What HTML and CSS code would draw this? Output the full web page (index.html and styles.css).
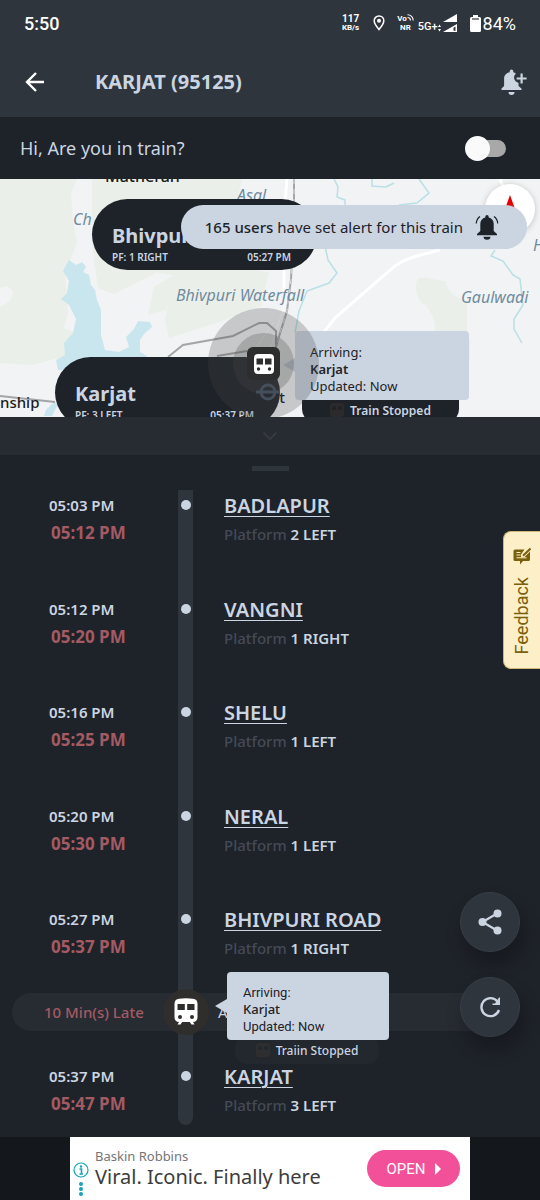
FILE: index.html
```
<!DOCTYPE html>
<html lang="en">
<head>
  <meta charset="UTF-8">
  <meta name="viewport" content="width=device-width, initial-scale=1.0">
  <title>KARJAT (95125)</title>
  <link rel="stylesheet" href="styles.css">
</head>
<body>
  <div class="page">
    <header class="top">
      <div class="status-bar">
        <span class="clock">5:50</span>
        <div class="status-icons">
          <div class="net-speed"><span>117</span><span>KB/s</span></div>
          <svg class="location" width="12" height="16" viewBox="0 0 12 16">
            <path d="M6 1C3.200 1 1.200 3 1.200 5.800 1.200 9 6 14.500 6 14.500S10.800 9 10.800 5.800C10.800 3 8.800 1 6 1z" fill="none" stroke="#fff" stroke-width="1.500"/>
            <circle cx="6" cy="5.800" r="2" fill="#fff"/>
          </svg>
          <div class="volte">
            <span>Vo<svg width="7" height="7" viewBox="0 0 7 7"><path d="M0.500 0.800C3.800 0.800 6.200 3.200 6.200 6.500M0.500 3.500C2.200 3.500 3.500 4.800 3.500 6.500" fill="none" stroke="#fff" stroke-width="1.100"/></svg></span>
            <span>NR</span>
          </div>
          <div class="signal">
            <span>5G+</span>
            <svg width="20" height="20" viewBox="0 0 20 20">
              <path d="M0 14l1.500-2.500L3 14zM0 16l1.500 2.500L3 16z" fill="#fff"/>
              <path d="M5 9L19 1v8z" fill="#fff"/>
              <path d="M5 19L19 11v8z" fill="#fff"/>
              <path d="M15.500 14.800l2-1.200v4.200h-2z" fill="#2f353d"/>
            </svg>
          </div>
          <div class="battery">
            <svg width="11" height="17" viewBox="0 0 11 17">
              <path d="M3 0h5v2h1.500A1.500 1.500 0 0 1 11 3.500v12A1.500 1.500 0 0 1 9.500 17h-8A1.500 1.500 0 0 1 0 15.500v-12A1.500 1.500 0 0 1 1.500 2H3z" fill="#fff"/>
              <path d="M2 4h7" stroke="#2f353d" stroke-width="1.200"/>
            </svg>
            <span>84%</span>
          </div>
        </div>
      </div>
      <div class="title-bar">
        <button class="icon-btn" aria-label="Back">
          <svg width="22" height="22" viewBox="0 0 22 22"><path d="M20 11H3M12 2L3 11l9 9" fill="none" stroke="#fff" stroke-width="2.400"/></svg>
        </button>
        <h1>KARJAT (95125)</h1>
        <button class="icon-btn" aria-label="Set alert">
          <svg width="28" height="28" viewBox="0 0 28 28" fill="#cbd5e1">
            <path d="M11.500 1.500a1.800 1.800 0 0 1 1.800 1.800v.9c1 .3 1.900.8 2.600 1.500-1.700 1.300-2.200 3.400-1.600 5.400.6 2 2.200 3.300 4.200 3.600v3.200l3 2.600v1.600H1.500v-1.600l2.600-2.600v-7.600c0-3 2.200-5.400 5.600-6.100v-.9a1.800 1.800 0 0 1 1.800-1.800z"/>
            <path d="M8.500 24h6a3 3 0 0 1-6 0z"/>
            <path d="M20.500 5.500h2.200v3.900h3.900v2.200h-3.900v3.900h-2.200v-3.900h-3.900V9.400h3.900z"/>
          </svg>
        </button>
      </div>
    </header>

    <label class="in-train">
      <span>Hi, Are you in train?</span>
      <input type="checkbox" class="switch">
    </label>

    <section class="map">
      <svg class="map-tiles" viewBox="0 179 540 238" preserveAspectRatio="xMidYMid slice">
        <rect x="0" y="179" width="540" height="238" fill="#f1f3f4"/>
        <!-- forest -->
        <g fill="#eaf0e9">
          <path d="M0 179h77l-6 14 2 28 4 22-12 30 3 40-4 15 12 5-6 22-38 10-32-2v-56l10-6 3-9-5-6-8 2z"/>
          <path d="M92 179h150l-8 35 4 60-62 6-10 30-18 5 6-28 20-12-18-2-42 21-16-6-6-40z"/>
          <path d="M175 274l50-8 44 6-8 34-42 16-50 16-4-18z"/>
          <path d="M417 280c8-7 18 2 28 1 3 10 8 16 22 20v34h-32c2-16-5-22-9-30-8 0-12-18-9-25zM440 340h30v20h-24z"/>
        </g>
        <!-- lake -->
        <path d="M69 260l7 5 6-3 4 5-3 5 6 3 2 10 4 5 2 10 4 10v25l4 15 14 2 10-5-3-10 8-8 4-8 12 1 2 5-8 7-4 6v12l7 4v14H58l-2-10 9-5-1-12 9-10 3-14-7-14-8-6 6-6 2-12-6-10z" fill="#c9e6ee"/>
        <path d="M46 410l8-8 4 2-6 12h-8z" fill="#c9e6ee"/>
        <!-- streams -->
        <g fill="none" stroke="#b9dfe7" stroke-width="1.500">
          <path d="M334 179l4 8-1 10 8 3v8M372 179v7l14 1 8-4M419 179l10 14-12 10-18 2"/>
          <path d="M325 246l3 14 9 13-8 10-22 8-8 20-4 22M495 250l-4 6 12 5 10 14 7 4 3 26-9 14v10l8 14"/>
        </g>
        <!-- roads -->
        <path d="M440 250c-20 5-34 8-45 16l-28 24-32 28-30 38M500 179l4 10M287 179l-1 12-2 30v70" fill="none" stroke="#fff" stroke-width="3"/>
        <path d="M286 300l-16 50M273 323l-20 30" fill="none" stroke="#fff" stroke-width="1"/>
        <!-- railway -->
        <g fill="none" stroke="#a4a5a7" stroke-width="2">
          <path d="M294 179v40l-3 60-4 32-10 32-4 15"/>
          <path d="M168 357l15-12 50-9 26-13h8l9 8v14M217 356l30-5M0 396l55 6"/>
        </g>
        <path d="M294 179v40l-3 60-4 32-10 32" fill="none" stroke="#d8dadb" stroke-width="1" stroke-dasharray="5 5"/>
        <g class="place">
          <text x="73" y="225">Ch</text>
          <text x="237" y="201">Asal</text>
          <text x="176" y="301">Bhivpuri Waterfall</text>
          <text x="461" y="303">Gaulwadi</text>
          <text x="533" y="251">H</text>
        </g>
        <g class="town">
          <text x="105" y="182" class="town-large">Matheran</text>
          <text x="0" y="408">nship</text>
          <text x="285" y="403" text-anchor="end">Karjat</text>
        </g>
      </svg>

      <button class="compass" aria-label="Reset bearing">
        <svg width="12" height="28" viewBox="0 0 12 28"><path d="M6 0l5 14H1z" fill="#e60000"/><path d="M6 28l5-14H1z" fill="#ccc"/></svg>
      </button>

      <div class="pin pin-bhivpuri">
        <h2>Bhivpuri</h2>
        <p><span>PF: 1 RIGHT</span><span>05:27 PM</span></p>
      </div>
      <div class="pin pin-karjat">
        <h2>Karjat</h2>
        <p><span>PF: 3 LEFT</span><span>05:37 PM</span></p>
      </div>

      <div class="map-chip">
        <svg width="14" height="14" viewBox="0 0 14 14"><rect width="14" height="14" rx="3" fill="#2c2a2a"/><path d="M2 3h4v4H2zM8 3h4v4H8z" fill="#1e2229"/></svg>
        <span>Train Stopped</span>
      </div>
      <div class="callout map-callout">
        <span>Arriving:</span>
        <strong>Karjat</strong>
        <span>Updated: Now</span>
      </div>

      <div class="pulse">
        <div class="pulse-inner">
          <div class="train-pin">
            <svg width="20" height="20" viewBox="0 0 20 20">
              <rect width="20" height="20" rx="4" fill="#fff"/>
              <path d="M2.500 4.500H9v6H2.500zM11 4.500h6.500v6H11z" fill="#2e2d2e"/>
              <circle cx="4.500" cy="15" r="1.700" fill="#2e2d2e"/><circle cx="15.500" cy="15" r="1.700" fill="#2e2d2e"/>
            </svg>
          </div>
        </div>
      </div>
      <svg class="roundel" width="24" height="18" viewBox="0 0 24 18"><circle cx="12" cy="9" r="7" fill="none" stroke="#454e5b" stroke-width="3"/><path d="M0 9h24" stroke="#454e5b" stroke-width="3"/></svg>

      <div class="alert-banner">
        <span><b>165 users</b> have set alert for this train</span>
        <svg width="24" height="26" viewBox="0 0 24 26" fill="#1e2229">
          <path d="M12 1a1.700 1.700 0 0 1 1.700 1.700v.7c3 .7 5 3.200 5 6.300v7.200l3.300 3v1.400H2v-1.400l3.300-3V9.700c0-3.100 2-5.600 5-6.300v-.7A1.700 1.700 0 0 1 12 1z"/>
          <path d="M8.500 22.800h7a3.500 3 0 0 1-7 0z"/>
          <path d="M5 2.500C2.800 4 1.500 6.500 1.200 9.500M19 2.500c2.200 1.500 3.500 4 3.800 7" fill="none" stroke="#1e2229" stroke-width="1.200"/>
        </svg>
      </div>
    </section>

    <button class="collapse" aria-label="Collapse map">
      <svg width="16" height="10" viewBox="0 0 16 10"><path d="M1.500 1.500L8 8l6.500-6.500" fill="none" stroke="#373a3e" stroke-width="2"/></svg>
    </button>

    <main class="sheet">
      <div class="grabber"></div>
      <ol class="timeline">
        <li class="stop">
          <div class="times"><span>05:03 PM</span><span class="late">05:12 PM</span></div>
          <div class="track"><i class="dot"></i></div>
          <div class="station"><a href="#">BADLAPUR</a><p>Platform <b>2 LEFT</b></p></div>
        </li>
        <li class="stop">
          <div class="times"><span>05:12 PM</span><span class="late">05:20 PM</span></div>
          <div class="track"><i class="dot"></i></div>
          <div class="station"><a href="#">VANGNI</a><p>Platform <b>1 RIGHT</b></p></div>
        </li>
        <li class="stop">
          <div class="times"><span>05:16 PM</span><span class="late">05:25 PM</span></div>
          <div class="track"><i class="dot"></i></div>
          <div class="station"><a href="#">SHELU</a><p>Platform <b>1 LEFT</b></p></div>
        </li>
        <li class="stop">
          <div class="times"><span>05:20 PM</span><span class="late">05:30 PM</span></div>
          <div class="track"><i class="dot"></i></div>
          <div class="station"><a href="#">NERAL</a><p>Platform <b>1 LEFT</b></p></div>
        </li>
        <li class="stop departed">
          <div class="times"><span>05:27 PM</span><span class="late">05:37 PM</span></div>
          <div class="track"><i class="dot"></i></div>
          <div class="station"><a href="#">BHIVPURI ROAD</a><p>Platform <b>1 RIGHT</b></p></div>
        </li>
        <li class="live">
          <div class="live-row">
            <span class="delay">10 Min(s) Late</span>
            <div class="live-track">
              <div class="live-train">
                <svg width="24" height="28" viewBox="0 0 24 28">
                  <path d="M5 .8C9 0 15 0 19 .8c3 .6 4.500 2 4.500 4.700v14c0 2.700-1.800 4.500-4.500 4.500l1.500 2.500h-3L15.800 24H8.200l-1.700 2.500h-3L5 24C2.300 24 .5 22.200.5 19.500v-14C.5 2.800 2 1.400 5 .8z" fill="#fff"/>
                  <path d="M3.500 6h7.300v6H3.500zM13.200 6h7.300v6h-7.300z" fill="#302d2d"/>
                  <circle cx="6" cy="19" r="2" fill="#302d2d"/><circle cx="18" cy="19" r="2" fill="#302d2d"/>
                </svg>
              </div>
            </div>
            <span class="live-label">Arriving</span>
          </div>
          <div class="live-chip">
            <svg width="14" height="14" viewBox="0 0 14 14"><rect width="14" height="14" rx="3" fill="#2f2e2f"/><path d="M2 3h4v4H2zM8 3h4v4H8z" fill="#23272e"/></svg>
            <span>Traiin Stopped</span>
          </div>
          <div class="callout live-callout">
            <span>Arriving:</span>
            <strong>Karjat</strong>
            <span>Updated: Now</span>
          </div>
        </li>
        <li class="stop last">
          <div class="times"><span>05:37 PM</span><span class="late">05:47 PM</span></div>
          <div class="track"><i class="dot"></i></div>
          <div class="station"><a href="#">KARJAT</a><p>Platform <b>3 LEFT</b></p></div>
        </li>
      </ol>

      <button class="feedback">
        <svg width="18" height="18" viewBox="0 0 18 18">
          <path d="M2 2.500h9.500L8 7.500v3l3.500-.5L17 4.500v8A1.500 1.500 0 0 1 15.500 14H10l-3 3.500V14H2A1.500 1.500 0 0 1 .5 12.500V4A1.500 1.500 0 0 1 2 2.500z" fill="#7a5f0c"/>
          <path d="M3.500 5.500h4M3.500 8h4M3.500 10.800h10" stroke="#fdf0c8" stroke-width="1"/>
          <path d="M10 8.800L17.500 1.500" stroke="#7a5f0c" stroke-width="2"/>
        </svg>
        <span>Feedback</span>
      </button>

      <div class="fabs">
        <button class="fab" aria-label="Share">
          <svg width="24" height="26" viewBox="0 0 24 26" fill="#cbd5e1"><path d="M19 4.500L4.500 13 19 21.500" fill="none" stroke="#cbd5e1" stroke-width="2.200"/><circle cx="19.500" cy="4.500" r="4"/><circle cx="4.500" cy="13" r="4"/><circle cx="19.500" cy="21.500" r="4"/></svg>
        </button>
        <button class="fab" aria-label="Refresh">
          <svg width="22" height="22" viewBox="0 0 22 22"><path d="M18.500 5.500A9 9 0 1 0 20 14" fill="none" stroke="#cbd5e1" stroke-width="2.400"/><path d="M21 1.500V9h-7.500V7.500h2.500l4-6z" fill="#cbd5e1"/></svg>
        </button>
      </div>
    </main>

    <footer class="ad-slot">
      <div class="ad">
        <div class="ad-marks">
          <svg width="16" height="16" viewBox="0 0 16 16"><circle cx="8" cy="8" r="7" fill="none" stroke="#14a3b8" stroke-width="1.200"/><circle cx="8" cy="4.500" r="1.200" fill="#14a3b8"/><path d="M6.500 7H8.500v5M6.500 12h3.500" fill="none" stroke="#14a3b8" stroke-width="1.600"/></svg>
          <svg width="4" height="14" viewBox="0 0 4 14" fill="#14a3b8"><circle cx="2" cy="2" r="2"/><circle cx="2" cy="7" r="2"/><circle cx="2" cy="12" r="2"/></svg>
        </div>
        <div class="ad-text">
          <span class="brand">Baskin Robbins</span>
          <span class="slogan">Viral. Iconic. Finally here</span>
        </div>
        <a class="ad-open" href="#">OPEN <svg width="6" height="12" viewBox="0 0 6 12"><path d="M0 0l6 6-6 6z" fill="#fff"/></svg></a>
      </div>
    </footer>
  </div>
</body>
</html>
```
FILE: styles.css
```
* {
  margin: 0;
  padding: 0;
  box-sizing: border-box;
}

body {
  font-family: "Noto Sans", "Open Sans", sans-serif;
  background: #1e2229;
  color: #cbd5e1;
}

button {
  border: none;
  background: none;
  font: inherit;
  color: inherit;
  cursor: pointer;
}

svg {
  display: block;
  flex: none;
}

.page {
  display: flex;
  flex-direction: column;
  min-height: 100vh;
}

/* header */
.top {
  background: #2f353d;
}

.status-bar {
  display: flex;
  align-items: center;
  justify-content: space-between;
  height: 46px;
  padding: 0 24px;
  font-family: Roboto, sans-serif;
  font-weight: 500;
  color: #fff;
}

.clock {
  font-size: 18px;
}

.status-icons,
.battery,
.signal {
  display: flex;
  align-items: center;
}

.status-icons {
  gap: 12px;
}

.net-speed,
.volte {
  display: flex;
  flex-direction: column;
  align-items: center;
  font-size: 8px;
  line-height: 9px;
  font-weight: 700;
}

.net-speed span:first-child {
  font-size: 10px;
}

.location {
  margin-left: 2px;
}

.volte span {
  display: flex;
}

.signal {
  align-items: flex-end;
  margin-left: -8px;
  font-size: 11px;
}

.battery {
  gap: 2px;
  font-size: 18px;
  font-weight: 400;
}

.title-bar {
  display: flex;
  align-items: center;
  height: 71px;
  padding: 0 12px 0 24px;
}

.title-bar h1 {
  flex: 1;
  margin-left: 49px;
  font-size: 20px;
  font-weight: 700;
}

.in-train {
  display: flex;
  align-items: center;
  justify-content: space-between;
  height: 62px;
  padding: 0 34px 0 20px;
  font-size: 18px;
}

.switch {
  appearance: none;
  display: flex;
  align-items: center;
  width: 33px;
  height: 17px;
  border-radius: 9px;
  background: #a8a8a9;
  cursor: pointer;
}

.switch::before {
  content: "";
  flex: none;
  width: 25px;
  height: 25px;
  margin: 0 -8px;
  border-radius: 50%;
  background: #fafafa;
}

.switch:checked {
  justify-content: flex-end;
}

/* map */
.map {
  position: relative;
  height: 238px;
  overflow: hidden;
}

.map-tiles {
  width: 100%;
  height: 100%;
}

.place {
  font-size: 16px;
  font-style: italic;
  fill: #6f8ba0;
}

.town {
  font-size: 15px;
  font-weight: 500;
  fill: #1b1b1b;
}

.town-large {
  font-size: 16px;
}

.compass {
  position: absolute;
  top: 5px;
  right: 5px;
  display: grid;
  place-items: center;
  width: 50px;
  height: 50px;
  border-radius: 50%;
  background: #fff;
  box-shadow: 0 1px 6px rgba(0, 0, 0, 0.2);
}

.pin {
  position: absolute;
  width: 225px;
  height: 71px;
  padding: 22px 26px 0 20px;
  border-radius: 36px;
  background: #1e2229;
}

.pin h2 {
  font-size: 20px;
  line-height: 30px;
  font-weight: 700;
}

.pin p {
  display: flex;
  justify-content: space-between;
  font-size: 10px;
  line-height: 12px;
  font-weight: 600;
}

.pin-bhivpuri {
  left: 92px;
  top: 20px;
}

.pin-karjat {
  left: 55px;
  top: 178px;
}

.map-chip {
  position: absolute;
  left: 302px;
  top: 200px;
  display: flex;
  align-items: center;
  justify-content: center;
  gap: 6px;
  width: 157px;
  height: 44px;
  padding-top: 18px;
  border-radius: 14px;
  background: #1e2229;
  font-size: 12px;
  font-weight: 600;
}

.callout {
  position: absolute;
  display: flex;
  flex-direction: column;
  border-radius: 4px;
  background: #cbd5e1;
  color: #1e2229;
  font-size: 13px;
  line-height: 17px;
}

.callout strong {
  font-weight: 600;
}

.callout::before {
  content: "";
  position: absolute;
  right: 100%;
  top: 27px;
  border: 7px solid transparent;
  border-left: none;
  border-right: 12px solid #cbd5e1;
}

.map-callout {
  left: 295px;
  top: 152px;
  width: 174px;
  padding: 13px 15px 5px;
}

.pulse {
  position: absolute;
  left: 208px;
  top: 129px;
  display: grid;
  place-items: center;
  width: 111px;
  height: 111px;
  border-radius: 50%;
  background: rgba(70, 70, 70, 0.25);
}

.pulse-inner {
  display: grid;
  place-items: center;
  width: 61px;
  height: 61px;
  border-radius: 50%;
  background: rgba(70, 70, 70, 0.25);
}

.train-pin {
  display: grid;
  place-items: center;
  width: 33px;
  height: 33px;
  border-radius: 6px;
  background: #2e2d2e;
}

.roundel {
  position: absolute;
  left: 256px;
  top: 204px;
}

.alert-banner {
  position: absolute;
  right: 13px;
  top: 26px;
  display: flex;
  align-items: center;
  gap: 12px;
  height: 44px;
  padding: 0 28px 0 24px;
  border-radius: 22px;
  background: #cbd5e1;
  color: #1e2229;
  font-size: 15px;
}

.alert-banner b {
  font-weight: 500;
}

.collapse {
  display: grid;
  place-items: center;
  height: 38px;
  background: #272b32;
}

/* timeline */
.sheet {
  position: relative;
  flex: 1;
}

.grabber {
  width: 37px;
  height: 5px;
  margin: 11px auto 19px;
  background: #2f353d;
}

.timeline {
  list-style: none;
}

.stop {
  display: grid;
  grid-template-columns: 178px 15px 1fr;
  min-height: 104px;
}

.stop:nth-child(even) {
  min-height: 103px;
}

.departed {
  min-height: 89px;
}

.last {
  min-height: 76px;
}

.times {
  display: flex;
  flex-direction: column;
  align-items: flex-start;
  padding-left: 49px;
  font-size: 15px;
  line-height: 30px;
  font-weight: 600;
}

.late {
  padding-left: 2px;
  font-size: 17px;
  line-height: 26px;
  font-weight: 700;
  color: #a35a63;
}

.track,
.live-track {
  display: flex;
  justify-content: center;
  background: #2f353d;
}

.track {
  padding-top: 10px;
}

.last .track {
  height: 64px;
  border-radius: 0 0 8px 8px;
}

.dot {
  width: 10px;
  height: 10px;
  border-radius: 50%;
  background: #cbd5e1;
}

.station {
  padding-left: 31px;
}

.station a {
  display: block;
  width: fit-content;
  font-size: 20px;
  line-height: 32px;
  font-weight: 600;
  color: #cbd5e1;
  text-underline-offset: 3px;
  text-decoration-thickness: 1px;
}

.station p {
  font-size: 15px;
  line-height: 24px;
  font-weight: 500;
  color: #444b56;
}

.station b {
  font-weight: 600;
  color: #cbd5e1;
}

.live {
  position: relative;
  height: 68px;
  background: linear-gradient(#2f353d, #2f353d) 178px 0 / 15px 100% no-repeat;
}

.live-row {
  display: grid;
  grid-template-columns: 166px 15px 1fr;
  align-items: center;
  height: 38px;
  margin: 0 24px 0 12px;
  border-radius: 19px;
  background: #272b32;
}

.delay {
  padding-left: 32px;
  font-size: 15px;
  font-weight: 500;
  color: #a35a63;
}

.live-track {
  align-items: center;
  height: 38px;
}

.live-train {
  display: grid;
  flex: none;
  place-items: center;
  width: 46px;
  height: 46px;
  border-radius: 50%;
  background: #302d2d;
}

.live-label {
  padding-left: 25px;
  font-size: 15px;
}

.live-chip {
  position: absolute;
  left: 235px;
  top: 43px;
  display: flex;
  align-items: center;
  justify-content: center;
  gap: 6px;
  width: 144px;
  height: 28px;
  border-radius: 12px;
  background: #23272e;
  font-size: 12px;
  font-weight: 500;
}

.live-callout {
  left: 227px;
  top: -21px;
  width: 162px;
  padding: 12px 16px 5px;
  font-family: Roboto, sans-serif;
}

.live-callout strong {
  font-family: "Noto Sans", sans-serif;
  font-weight: 500;
}

/* floating controls */
.feedback {
  position: absolute;
  right: 0;
  top: 76px;
  display: flex;
  flex-direction: column;
  align-items: center;
  gap: 12px;
  width: 37px;
  padding: 15px 0 14px;
  border: 1px solid #cdb878;
  border-right: none;
  border-radius: 8px 0 0 8px;
  background: #fdf0c8;
  color: #7a5f0c;
  font-family: Roboto, sans-serif;
  font-size: 18px;
  line-height: 20px;
}

.feedback span {
  writing-mode: vertical-rl;
  transform: rotate(180deg);
}

.fabs {
  position: absolute;
  right: 20px;
  bottom: 100px;
  display: flex;
  flex-direction: column;
  gap: 25px;
}

.fab {
  display: grid;
  place-items: center;
  width: 60px;
  height: 60px;
  border: 1px solid #383e47;
  border-radius: 50%;
  background: #2f353d;
  box-shadow: 4px 12px 18px rgba(0, 0, 0, 0.25);
}

/* ad */
.ad-slot {
  display: flex;
  justify-content: center;
  height: 63px;
  background: #14171b;
}

.ad {
  display: flex;
  align-items: center;
  width: 400px;
  padding: 0 10px 0 3px;
  background: #fff;
}

.ad-marks {
  display: flex;
  flex-direction: column;
  align-items: center;
  gap: 4px;
  width: 16px;
  padding-top: 20px;
}

.ad-text {
  display: flex;
  flex: 1;
  flex-direction: column;
  padding-left: 6px;
}

.brand {
  font-size: 13px;
  line-height: 17px;
  color: #757575;
}

.slogan {
  font-size: 20px;
  line-height: 24px;
  color: #3c3c3c;
}

.ad-open {
  display: flex;
  align-items: center;
  justify-content: center;
  gap: 9px;
  width: 93px;
  height: 37px;
  border-radius: 19px;
  background: #f25098;
  color: #fff;
  font-family: Roboto, sans-serif;
  font-size: 15px;
  text-decoration: none;
}
```
